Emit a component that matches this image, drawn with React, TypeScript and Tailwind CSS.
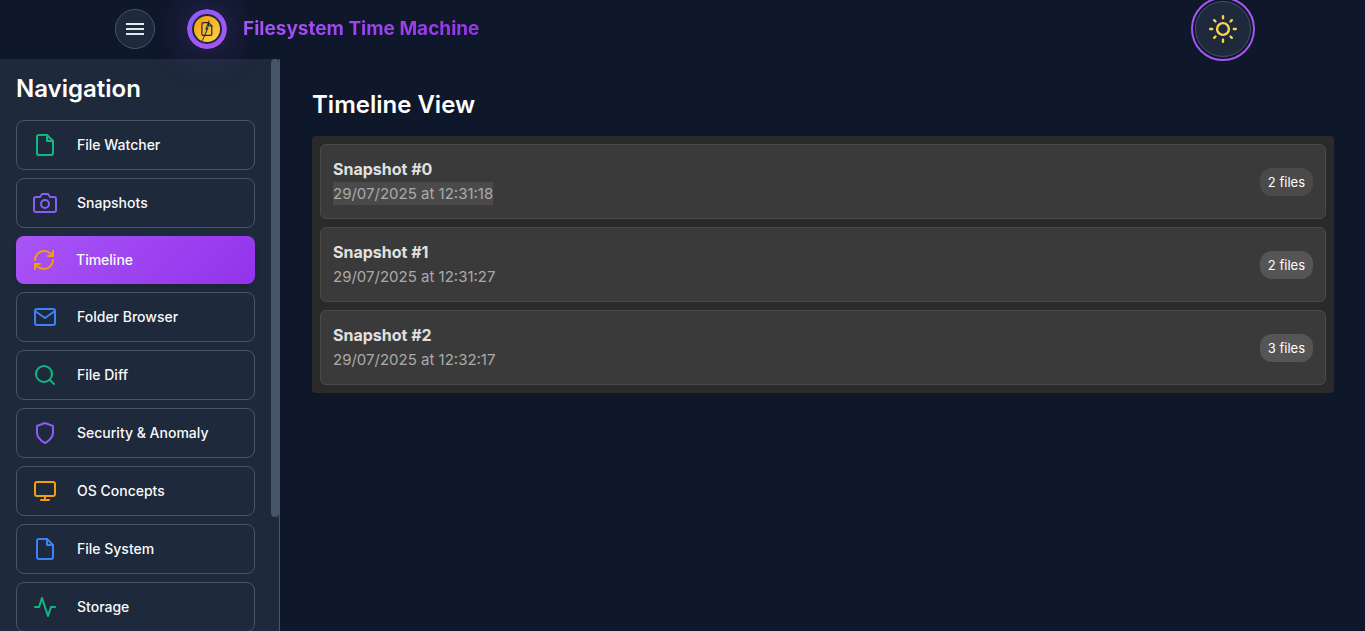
import type { ReactNode } from "react";
import { FiActivity, FiCamera, FiMail, FiMonitor, FiSearch, FiShield } from "react-icons/fi";
import { RefreshCw } from "lucide-react";

function FileIcon({ className }: { className: string }) {
  return (
    <svg viewBox="0 0 24 24" fill="none" stroke="currentColor" strokeWidth="2" strokeLinecap="round" strokeLinejoin="round" className={className} aria-hidden="true">
      <path d="M14 2H6a2 2 0 0 0-2 2v16a2 2 0 0 0 2 2h12a2 2 0 0 0 2-2V8z" />
      <path d="M14 2v6h6" />
    </svg>
  );
}

function Logo() {
  return (
    <svg viewBox="0 0 40 40" className="size-10 rounded-full shadow-[0_0_40px_rgba(139,92,246,0.35)]" aria-hidden="true">
      <defs>
        <linearGradient id="ring" x1="0" y1="0" x2="1" y2="1">
          <stop offset="0" stopColor="#8b5cf6" />
          <stop offset="1" stopColor="#a855f7" />
        </linearGradient>
        <linearGradient id="coin" x1="0" y1="0" x2="1" y2="1">
          <stop offset="0" stopColor="#f59e0b" />
          <stop offset="1" stopColor="#fcd34d" />
        </linearGradient>
      </defs>
      <circle cx="20" cy="20" r="20" fill="url(#ring)" />
      <circle cx="20" cy="20" r="15" fill="#1e293b" />
      <circle cx="20" cy="20" r="13" fill="url(#coin)" />
      <g fill="none" stroke="#1e293b" strokeWidth="1.2" strokeLinejoin="round" strokeLinecap="round">
        <path d="M21.5 13.600h-5.300a1.300 1.300 0 0 0-1.300 1.300v10.200a1.300 1.300 0 0 0 1.300 1.300h7.300a1.300 1.300 0 0 0 1.300-1.300V17z" />
        <path d="M21.500 13.600V17h3.300" />
      </g>
      <path d="M22.200 11.500l-3.600 8.700h1.400L15.300 31.800l5.900-12.800h-1.200z" fill="#1e293b" stroke="#1e293b" strokeWidth="0.5" />
    </svg>
  );
}

function SunIcon() {
  return (
    <svg viewBox="0 0 28 28" fill="none" stroke="#fcd34d" strokeWidth="2.4" strokeLinecap="round" className="size-7" aria-hidden="true">
      <circle cx="14" cy="14" r="5.900" />
      <path d="M14 1.200v2M14 24.800v2M1.200 14h2M24.800 14h2M5.200 5.200l1.300 1.300M21.500 21.500l1.300 1.300M5.200 22.800l1.300-1.300M21.500 6.500l1.300-1.300" />
    </svg>
  );
}

const navItems: { label: string; icon: ReactNode; active?: boolean }[] = [
  { label: "File Watcher", icon: <FileIcon className="size-6 text-[#10b981]" /> },
  { label: "Snapshots", icon: <FiCamera className="size-6 text-[#8b5cf6]" /> },
  { label: "Timeline", icon: <RefreshCw className="size-6 text-[#f59e0b]" />, active: true },
  { label: "Folder Browser", icon: <FiMail className="size-6 text-[#3b82f6]" /> },
  { label: "File Diff", icon: <FiSearch className="size-6 text-[#10b981]" /> },
  { label: "Security & Anomaly", icon: <FiShield className="size-6 text-[#8b5cf6]" /> },
  { label: "OS Concepts", icon: <FiMonitor className="size-6 text-[#f59e0b]" /> },
  { label: "File System", icon: <FileIcon className="size-6 text-[#3b82f6]" /> },
  { label: "Storage", icon: <FiActivity className="size-6 text-[#10b981]" /> },
];

const snapshots = [
  { id: 0, date: "29/07/2025 at 12:31:18", files: 2, selected: true },
  { id: 1, date: "29/07/2025 at 12:31:27", files: 2, selected: false },
  { id: 2, date: "29/07/2025 at 12:32:17", files: 3, selected: false },
];

function Header() {
  return (
    <header className="relative z-10 flex h-[59px] shrink-0 items-center justify-between border-b border-slate-900 pr-[110px] pl-[115px]">
      <div className="flex items-center">
        <button type="button" aria-label="Toggle navigation" className="flex size-10 items-center justify-center rounded-full border border-[#475569] bg-[#1e293b]">
          <svg viewBox="0 0 18 14" className="h-3.5 w-[18px]" stroke="#e2e8f0" strokeWidth="2" aria-hidden="true">
            <path d="M0 2h18M0 7h18M0 12h18" />
          </svg>
        </button>
        <a href="#" className="ml-8 flex items-center gap-4">
          <Logo />
          <span className="bg-linear-[135deg] from-[#a855f7] to-[#9333ea] bg-clip-text text-[19px] leading-[30px] font-bold text-transparent">
            Filesystem Time Machine
          </span>
        </a>
      </div>
      <button type="button" aria-label="Toggle theme" className="-my-1 flex size-16 items-center justify-center rounded-full border-2 border-[#a855f7] p-0.5">
        <span className="flex size-full items-center justify-center rounded-full border border-[#475569] bg-[#1e293b]">
          <SunIcon />
        </span>
      </button>
    </header>
  );
}

function Sidebar() {
  return (
    <aside className="flex w-[280px] shrink-0 border-r border-[#475569] bg-[#1e293b]">
      <nav aria-label="Main" className="flex-1 overflow-y-auto px-4 pt-3 [scrollbar-width:none]">
        <h2 className="mb-3.5 text-2xl leading-[35px] font-semibold text-white">Navigation</h2>
        <ul className="flex flex-col gap-2">
          {navItems.map((item) => (
            <li key={item.label}>
              <button
                type="button"
                aria-current={item.active ? "page" : undefined}
                className={
                  item.active
                    ? "flex h-12 w-full items-center gap-5 rounded-lg bg-linear-[135deg] from-[#a855f7] to-[#9333ea] px-4 text-sm font-medium text-slate-50 shadow-md"
                    : "flex h-[50px] w-full items-center gap-5 rounded-lg border border-[#475569] px-4 text-sm font-medium text-slate-50"
                }
              >
                {item.icon}
                {item.label}
              </button>
            </li>
          ))}
        </ul>
      </nav>
      <div className="w-2 shrink-0" aria-hidden="true">
        <div className="h-4/5 rounded-full bg-[#475569]" />
      </div>
    </aside>
  );
}

export default function App() {
  return (
    <div className="flex h-screen flex-col bg-[#0f172a] font-['Inter',sans-serif] text-slate-50">
      <Header />
      <div className="flex min-h-0 flex-1">
        <Sidebar />
        <main className="min-w-0 flex-1 overflow-y-auto pt-7 pr-[31px] pl-8">
          <h1 className="mb-3.5 text-2xl leading-[35px] font-semibold text-white">Timeline View</h1>
          <ul className="flex flex-col gap-2 rounded bg-[#2a2a2a] p-2">
            {snapshots.map((s) => (
              <li key={s.id} className="flex items-center justify-between rounded-md border border-[#4a4a4a] bg-[#3a3a3a] p-3">
                <div>
                  <h3 className="text-base leading-6 font-bold text-[#e0e0e0]">Snapshot #{s.id}</h3>
                  <p className="text-[15px] leading-[25px] text-[#aaaaaa]">
                    <span className={s.selected ? "bg-[#4a4a4a] py-0.5" : ""}>{s.date}</span>
                  </p>
                </div>
                <span className={s.selected ? "rounded-xl bg-[#4a4a4a] px-2 py-1 text-[13px] leading-5 text-white" : "rounded-xl bg-[#555555] px-2 py-1 text-[13px] leading-5 text-white"}>
                  {s.files} files
                </span>
              </li>
            ))}
          </ul>
        </main>
      </div>
    </div>
  );
}
